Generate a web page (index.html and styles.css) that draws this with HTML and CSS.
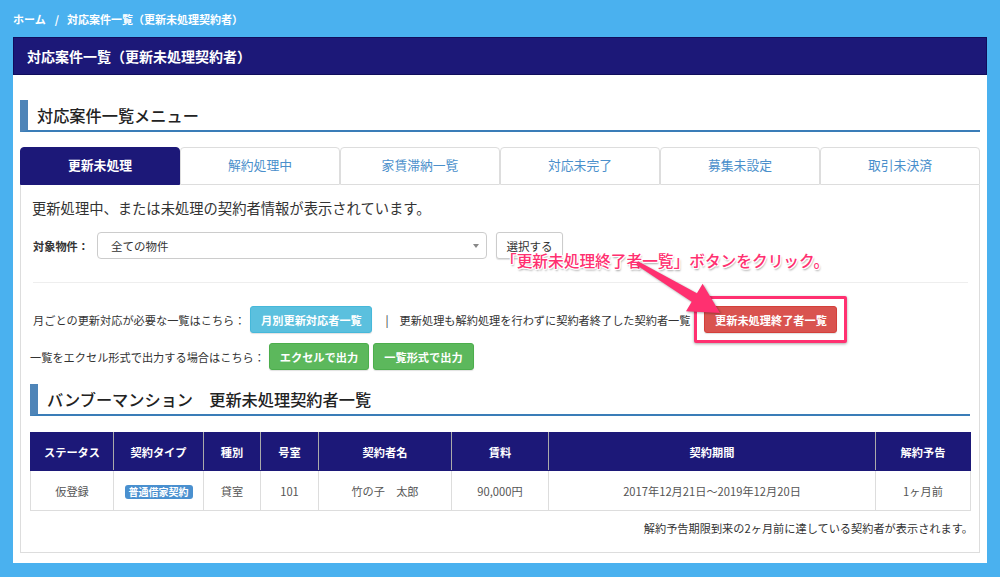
FILE: index.html
```html
<!DOCTYPE html>
<html lang="ja">
<head>
<meta charset="utf-8">
<title>対応案件一覧（更新未処理契約者）</title>
<link rel="stylesheet" href="styles.css">
</head>
<body>
<div class="crumbs"><span>ホーム</span><span class="sep">/</span><span>対応案件一覧（更新未処理契約者）</span></div>
<div class="panel">
  <div class="panel-head">対応案件一覧（更新未処理契約者）</div>
  <div class="panel-body">
    <h2 class="sec-title">対応案件一覧メニュー</h2>
    <div class="tabs">
      <div class="tab active">更新未処理</div>
      <div class="tab">解約処理中</div>
      <div class="tab">家賃滞納一覧</div>
      <div class="tab">対応未完了</div>
      <div class="tab">募集未設定</div>
      <div class="tab">取引未決済</div>
    </div>
    <div class="tab-content">
      <p class="desc">更新処理中、または未処理の契約者情報が表示されています。</p>
      <div class="form-row">
        <span class="label">対象物件：</span>
        <div class="select"><span>全ての物件</span><span class="caret"></span></div>
        <div class="btn btn-default">選択する</div>
      </div>
      <div class="rule"></div>
      <div class="act-row">
        <span class="txt">月ごとの更新対応が必要な一覧はこちら：</span>
        <div class="btn btn-info">月別更新対応者一覧</div>
        <span class="bar">|</span>
        <span class="txt">更新処理も解約処理を行わずに契約者終了した契約者一覧</span>
        <span class="hilite"><span class="btn btn-danger">更新未処理終了者一覧</span></span>
      </div>
      <div class="act-row row2">
        <span class="txt">一覧をエクセル形式で出力する場合はこちら：</span>
        <div class="btn btn-success">エクセルで出力</div>
        <div class="btn btn-success">一覧形式で出力</div>
      </div>
      <h2 class="sec-title sec2">バンブーマンション　更新未処理契約者一覧</h2>
      <table class="grid">
        <colgroup>
          <col class="c1"><col class="c2"><col class="c3"><col class="c4"><col class="c5"><col class="c6"><col class="c7"><col class="c8">
        </colgroup>
        <thead>
          <tr><th>ステータス</th><th>契約タイプ</th><th>種別</th><th>号室</th><th>契約者名</th><th>賃料</th><th>契約期間</th><th>解約予告</th></tr>
        </thead>
        <tbody>
          <tr><td>仮登録</td><td><span class="badge">普通借家契約</span></td><td>貸室</td><td>101</td><td>竹の子　太郎</td><td>90,000円</td><td>2017年12月21日～2019年12月20日</td><td>1ヶ月前</td></tr>
        </tbody>
      </table>
      <p class="note">解約予告期限到来の2ヶ月前に達している契約者が表示されます。</p>
    </div>
  </div>
</div>
<div class="callout">「更新未処理終了者一覧」ボタンをクリック。</div>
<svg class="arrow" width="1000" height="577" viewBox="0 0 1000 577">
  <polygon points="636,264.7 691.7,301.8 686,311.2 720,313 702.6,283.8 696.9,293.2 638,261.3" fill="#ff3070"/>
</svg>
</body>
</html>
```

FILE: styles.css
```css
* { box-sizing: border-box; }
html, body { margin: 0; padding: 0; }
body {
  width: 1000px;
  height: 577px;
  overflow: hidden;
  background: #4ab1ef;
  font-family: "Noto Sans CJK JP", "Liberation Sans", sans-serif;
  color: #333;
  position: relative;
}
.crumbs {
  height: 37px;
  display: flex;
  align-items: center;
  padding: 0 13px;
  color: #fff;
  font-weight: 700;
  font-size: 11px;
}
.crumbs .sep { margin: 0 8px 0 9px; font-weight: 700; }

.panel {
  margin: 0 13px;
  height: 526px;
  background: #fff;
}
.panel-head {
  height: 38px;
  background: #1c1878;
  border: 1px solid #100d5c;
  color: #fff;
  font-weight: 700;
  font-size: 14px;
  display: flex;
  align-items: center;
  padding-left: 13px;
}
.panel-body { padding: 0 7px; }

.sec-title {
  margin: 25px 0 0;
  height: 32px;
  border-left: 8px solid #4f85b8;
  border-bottom: 2px solid #3a7db8;
  padding-left: 9px;
  font-size: 16.2px;
  font-weight: 500;
  color: #222;
  display: flex;
  align-items: center;
}

.tabs {
  display: flex;
  margin-top: 15px;
  height: 38px;
}
.tab {
  flex: 1;
  border: 1px solid #ddd;
  border-radius: 4px 4px 0 0;
  display: flex;
  align-items: center;
  justify-content: center;
  padding-bottom: 3px;
  font-size: 12.8px;
  color: #4a8fcb;
  background: #fff;
}
.tab.active {
  background: #1c1878;
  border-color: #1c1878;
  color: #fff;
  font-weight: 700;
}

.tab-content {
  border: 1px solid #ddd;
  border-top: none;
  height: 368px;
  padding: 0 9px;
}
.desc {
  margin: 0;
  padding: 13px 0 0 2px;
  font-size: 14.3px;
  line-height: 20px;
  color: #333;
}

.form-row {
  margin-top: 14px;
  display: flex;
  align-items: center;
  padding-left: 3px;
  height: 27px;
}
.label {
  font-weight: 700;
  font-size: 11.2px;
  color: #333;
  width: 64px;
}
.select {
  width: 390px;
  height: 27px;
  border: 1px solid #ccc;
  border-radius: 4px;
  display: flex;
  align-items: center;
  justify-content: space-between;
  padding: 0 7px 0 13px;
  font-size: 11.5px;
  color: #333;
}
.caret {
  width: 0;
  height: 0;
  border-left: 3px solid transparent;
  border-right: 3px solid transparent;
  border-top: 4px solid #888;
}
.form-row .btn-default { margin-left: 9px; }

.btn {
  height: 27px;
  display: inline-flex;
  align-items: center;
  justify-content: center;
  border-radius: 3px;
  font-size: 11.2px;
  font-weight: 700;
  color: #fff;
  white-space: nowrap;
  box-shadow: 0 1px 1px rgba(0,0,0,0.12);
}
.btn-default {
  width: 67px;
  background: #fff;
  border: 1px solid #ccc;
  color: #333;
  font-weight: 400;
  align-items: flex-start;
  padding-top: 5px;
  font-size: 11.5px;
}
.btn-info { width: 122px; background: #5bc0de; border: 1px solid #46b8da; margin-left: 5px; }
.btn-success { width: 100px; background: #5cb85c; border: 1px solid #4cae4c; }
.btn-success + .btn-success { margin-left: 4px; width: 101px; }
.btn-danger { width: 133px; background: #d9534f; border: 1px solid #d43f3a; }

.rule {
  margin: 23px 0 0 3px;
  width: 935px;
  border-top: 1px solid #eee;
}
.act-row {
  display: flex;
  align-items: center;
  height: 27px;
  margin-top: 23px;
  padding-left: 3px;
}
.act-row.row2 { margin-top: 10px; padding-left: 0; }
.txt { font-size: 11.2px; color: #333; }
.row2 .txt { margin-right: 4px; }
.bar { font-size: 11.5px; color: #333; margin: 0 11px 0 13px; }
.hilite {
  margin: -10px 0 -10px 4px;
  padding: 7px 7px;
  border: 3px solid #ff3070;
  border-radius: 2px;
  display: inline-flex;
  box-shadow: 0 1px 3px rgba(0,0,0,0.35);
  background: #fff;
}

.sec2 { margin-top: 14px; }

.grid {
  margin-top: 16px;
  width: 940px;
  border-collapse: collapse;
  table-layout: fixed;
  font-size: 11.2px;
}
.c1 { width: 83px; } .c2 { width: 90px; } .c3 { width: 57px; } .c4 { width: 58px; }
.c5 { width: 133px; } .c6 { width: 97px; } .c7 { width: 327px; } .c8 { width: 95px; }
.grid th {
  height: 38px;
  background: #1c1878;
  color: #fff;
  font-weight: 700;
  border: 1px solid #aaa;
  border-top-color: #1c1878;
  border-bottom-color: #1c1878;
  text-align: center;
}
.grid th:first-child { border-left-color: #1c1878; }
.grid th:last-child { border-right-color: #1c1878; }
.grid td {
  height: 40px;
  border: 1px solid #ddd;
  text-align: center;
  color: #555;
}
.badge {
  display: inline-block;
  background: #4a90cf;
  color: #fff;
  font-size: 10px;
  font-weight: 700;
  padding: 1px 4px;
  line-height: 12px;
  border-radius: 3px;
  vertical-align: middle;
}
.note {
  margin: 9px -3px 0 0;
  text-align: right;
  font-size: 11.2px;
  color: #333;
}

.callout {
  position: absolute;
  left: 501px;
  top: 251px;
  font-size: 15.7px;
  line-height: 19px;
  color: #ff3070;
  font-weight: 500;
  white-space: nowrap;
  text-shadow: -1px -1px 0 #fff, 1px -1px 0 #fff, -1px 1px 0 #fff, 1px 1px 0 #fff, 0 1px 0 #fff, 0 -1px 0 #fff, 1px 0 0 #fff, -1px 0 0 #fff, 1px 2px 2px rgba(0,0,0,0.4);
}
.arrow {
  position: absolute;
  left: 0;
  top: 0;
  pointer-events: none;
  filter: drop-shadow(1px 1px 1px rgba(0,0,0,0.35));
}
```
